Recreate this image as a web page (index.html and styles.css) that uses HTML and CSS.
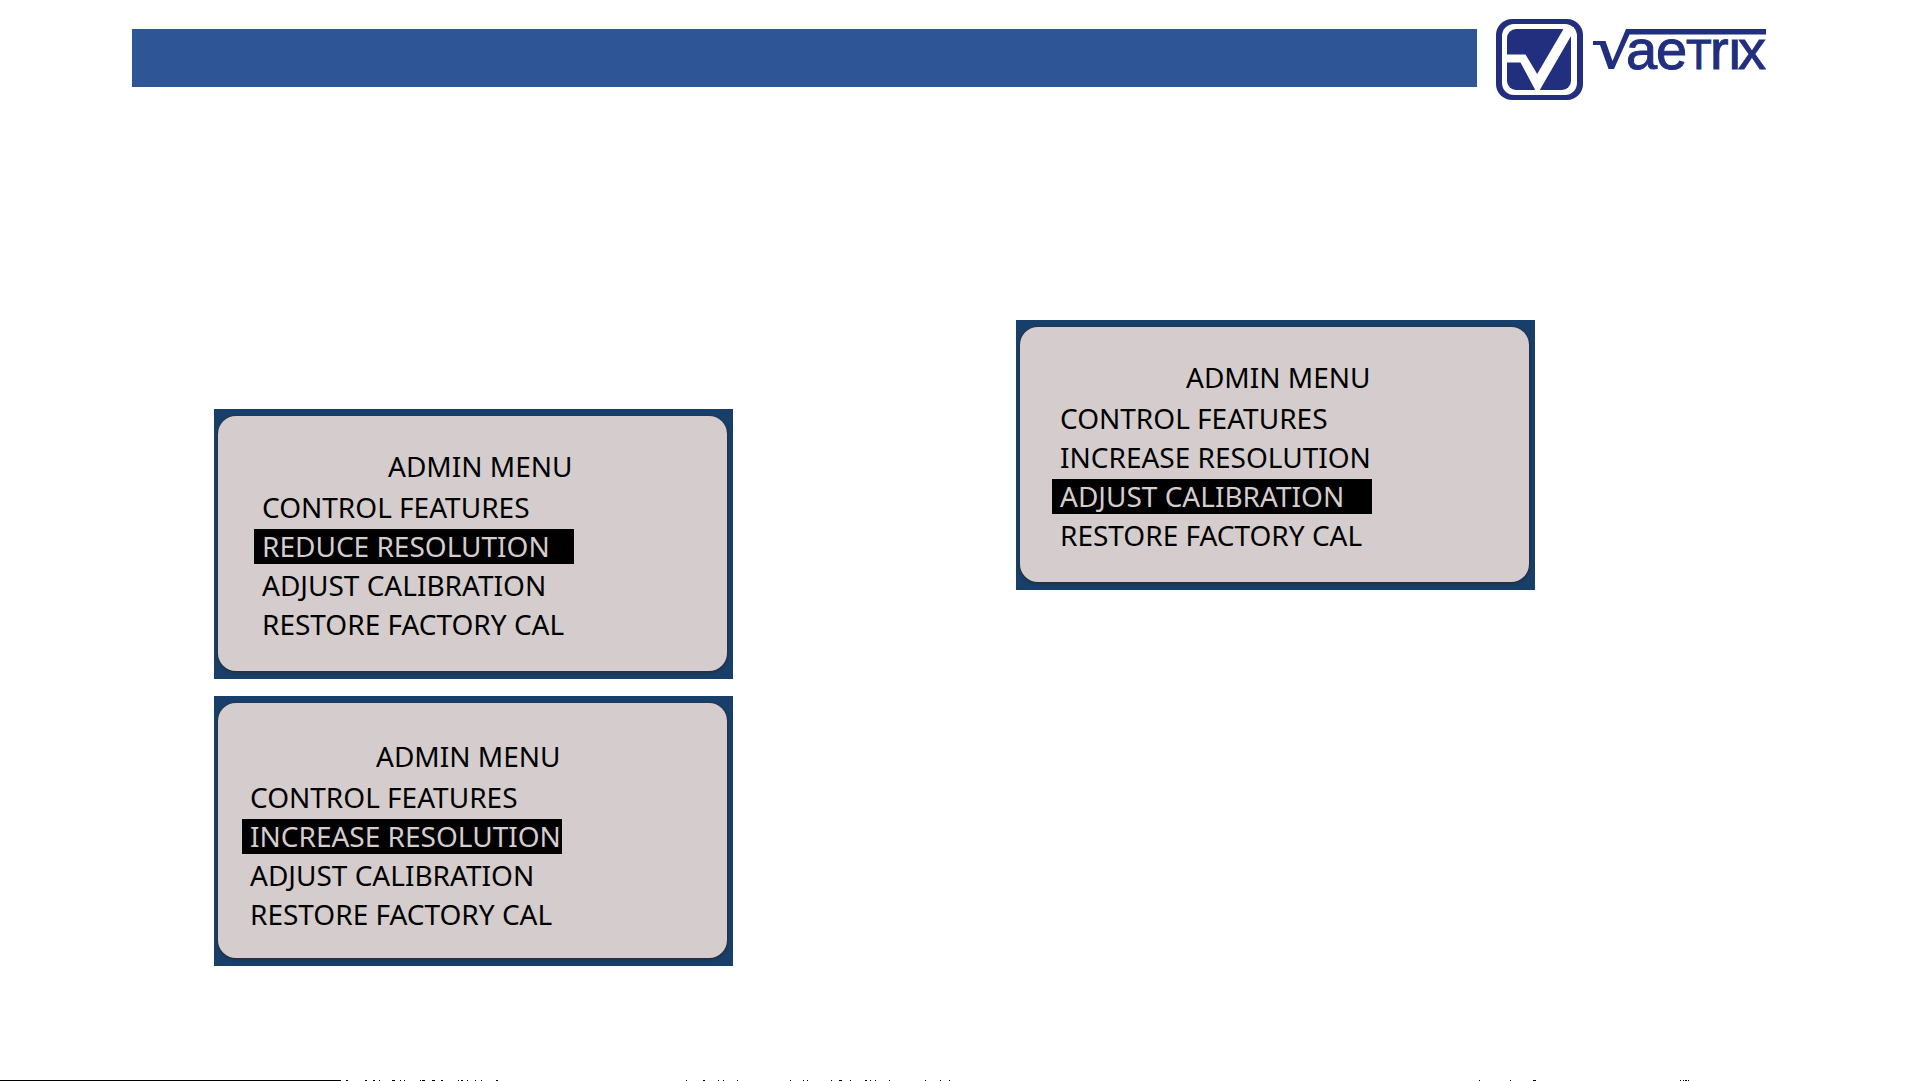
FILE: index.html
```html
<!DOCTYPE html>
<html lang="en">
<head>
<meta charset="utf-8">
<meta name="viewport" content="width=device-width, initial-scale=1">
<title>Vaetrix – Admin menu</title>
<link rel="stylesheet" href="styles.css">
</head>
<body>
<header class="header">
  <div class="header-bar"></div>
  <svg class="logo" viewBox="0 0 270 81" role="img" aria-label="Vaetrix">
    <rect class="logo-ink" width="87" height="81" rx="16"/>
    <rect class="logo-paper" x="6" y="5" width="75" height="71" rx="12"/>
    <rect class="logo-ink" x="11" y="10" width="64" height="61" rx="9"/>
    <path class="logo-paper" d="M9 35.5H29.500L41.200 55 67.500 10 70 8h8v8l-3 1L43.500 71.500h-4L24.500 43.500H9z"/>
    <path class="logo-ink" d="M97 22h12.500l7 20L130 10h140v5.500H133.500L118 50h-5.500L104 26h-7z"/>
    <g class="logo-text">
      <text y="50" x="130 160">ae</text>
      <text class="logo-cap" y="50" x="190">T</text>
      <text y="50" x="214 231 242">rıx</text>
    </g>
  </svg>
</header>

<main class="screens">
  <div class="column column-low">
    <section class="screen">
      <div class="panel panel-wide">
        <h2 class="title">ADMIN MENU</h2>
        <ul class="menu">
          <li class="item">CONTROL FEATURES</li>
          <li class="item selected">REDUCE RESOLUTION</li>
          <li class="item">ADJUST CALIBRATION</li>
          <li class="item">RESTORE FACTORY CAL</li>
        </ul>
      </div>
    </section>
    <section class="screen">
      <div class="panel panel-tight">
        <h2 class="title">ADMIN MENU</h2>
        <ul class="menu">
          <li class="item">CONTROL FEATURES</li>
          <li class="item selected">INCREASE RESOLUTION</li>
          <li class="item">ADJUST CALIBRATION</li>
          <li class="item">RESTORE FACTORY CAL</li>
        </ul>
      </div>
    </section>
  </div>
  <div class="column">
    <section class="screen">
      <div class="panel">
        <h2 class="title">ADMIN MENU</h2>
        <ul class="menu">
          <li class="item">CONTROL FEATURES</li>
          <li class="item">INCREASE RESOLUTION</li>
          <li class="item selected">ADJUST CALIBRATION</li>
          <li class="item">RESTORE FACTORY CAL</li>
        </ul>
      </div>
    </section>
  </div>
</main>

<footer class="footer">
  <svg class="edge" height="1" aria-hidden="true">
    <path d="M0 0h341v1H0zM346 0h2v1h-2zM365 0h2v1h-2zM373 0h2v1h-2zM379 0h1v1h-1zM392 0h3v1h-3zM400 0h1v1h-1zM404 0h1v1h-1zM420 0h1v1h-1zM422 0h3v1h-3zM432 0h3v1h-3zM441 0h2v1h-2zM458 0h1v1h-1zM461 0h2v1h-2zM467 0h1v1h-1zM475 0h1v1h-1zM481 0h1v1h-1zM496 0h2v1h-2zM686 0h1v1h-1zM703 0h2v1h-2zM718 0h1v1h-1zM723 0h1v1h-1zM737 0h1v1h-1zM790 0h1v1h-1zM803 0h1v1h-1zM807 0h1v1h-1zM831 0h1v1h-1zM839 0h3v1h-3zM850 0h1v1h-1zM865 0h2v1h-2zM870 0h1v1h-1zM875 0h1v1h-1zM889 0h1v1h-1zM925 0h1v1h-1zM940 0h1v1h-1zM949 0h1v1h-1zM1479 0h1v1h-1zM1510 0h1v1h-1zM1533 0h3v1h-3zM1680 0h1v1h-1zM1683 0h1v1h-1zM1685 0h2v1h-2zM1688 0h1v1h-1z"/>
  </svg>
</footer>
</body>
</html>
```
FILE: styles.css
```css
* {
  box-sizing: border-box;
}

body {
  margin: 0;
  min-height: 100vh;
  display: flex;
  flex-direction: column;
  background: #fff;
  color: #000;
  font-family: "Noto Sans", "Liberation Sans", sans-serif;
}

.header {
  display: flex;
  align-items: flex-start;
  gap: 19px;
  padding: 19px 155px 0 132px;
}

.header-bar {
  flex: 1;
  height: 58px;
  margin-top: 10px;
  background: #2e5596;
}

.logo {
  flex: none;
  width: 270px;
  height: 81px;
}

.logo-ink,
.logo-text {
  fill: #212f7e;
}

.logo-paper {
  fill: #fff;
}

.logo-text {
  font-family: "Liberation Sans", Arial, sans-serif;
  font-size: 56px;
  stroke: #212f7e;
  stroke-width: 1px;
}

.logo-cap {
  font-size: 42px;
}

.screens {
  display: grid;
  grid-template-columns: 1fr 1fr;
  padding: 220px 103px 40px 214px;
}

.column {
  display: flex;
  flex-direction: column;
  gap: 17px;
}

.column-low {
  padding-top: 89px;
}

.screen {
  max-width: 519px;
  min-height: 270px;
  display: flex;
  padding: 7px 6px 8px 4px;
  background: #183f69;
}

.panel {
  flex: 1;
  padding: 33px 24px 23px 32px;
  border-radius: 18px;
  background: #d5cdcd;
  box-shadow: 0 1px 2px 1px #262f40;
}

.panel-wide {
  padding-left: 36px;
}

.panel-tight {
  padding: 36px 24px 20px 24px;
}

.title,
.item {
  font-size: 28px;
  font-weight: 400;
  line-height: 35px;
  white-space: nowrap;
}

.title {
  margin: 0 0 6px;
  padding-left: 134px;
}

.menu {
  display: flex;
  flex-direction: column;
  gap: 4px;
  width: 320px;
  margin: 0;
  padding: 0;
  list-style: none;
}

.item {
  padding-left: 8px;
}

.selected {
  background: #000;
  color: #d5cdcd;
}

.footer {
  margin-top: auto;
}

.edge {
  display: block;
  width: 100%;
}
```
